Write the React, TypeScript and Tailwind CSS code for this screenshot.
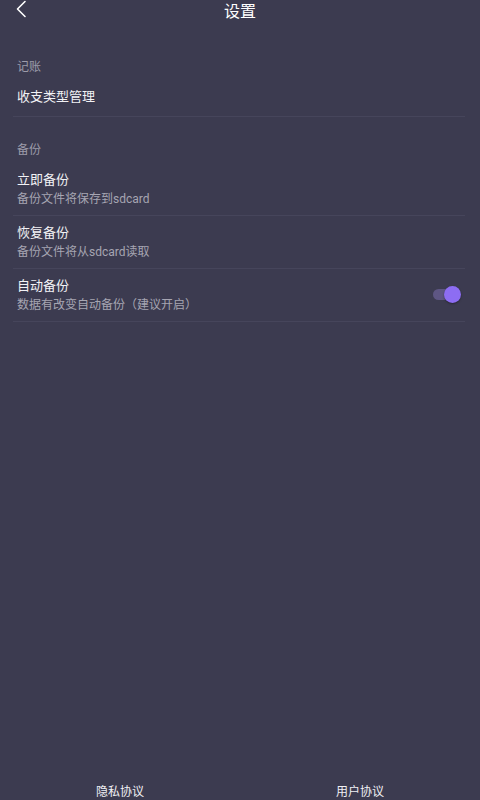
type Item = { title: string; sub?: string; toggle?: boolean }

const sections: { label: string; items: Item[] }[] = [
  { label: "记账", items: [{ title: "收支类型管理" }] },
  {
    label: "备份",
    items: [
      { title: "立即备份", sub: "备份文件将保存到sdcard" },
      { title: "恢复备份", sub: "备份文件将从sdcard读取" },
      { title: "自动备份", sub: "数据有改变自动备份（建议开启）", toggle: true },
    ],
  },
]

function Toggle() {
  return (
    <div className="relative flex h-[17px] w-[28px] items-center">
      <div className="h-[11px] w-[22px] rounded-full bg-[#5e5683]" />
      <div className="absolute right-0 top-0 h-[17px] w-[17px] rounded-full bg-[#8d6df3] shadow-[0_1px_2px_rgba(0,0,0,0.35)]" />
    </div>
  )
}

export default function App() {
  return (
    <div
      className="flex h-[800px] w-[480px] flex-col overflow-hidden bg-[#3c3b50] text-white"
      style={{ fontFamily: 'Roboto, "Noto Sans CJK SC", sans-serif' }}
    >
      <header className="relative flex h-6 items-center justify-center">
        <svg className="absolute left-0 top-0" width="32" height="20" viewBox="0 0 32 20" fill="none">
          <polyline points="25,1.5 17.5,9 25,16.5" stroke="white" strokeWidth="1.6" strokeLinecap="round" strokeLinejoin="round" />
        </svg>
        <h1 className="text-[16px] leading-6 text-white">设置</h1>
      </header>

      <main className="flex-1 pl-[13px] pr-[15px]">
        {sections.map((s, i) => (
          <section key={s.label} className={i === 0 ? "mt-[33px]" : "mt-[23px]"}>
            <div className="px-1 text-[12px] leading-5 text-[#9d9caa]">{s.label}</div>
            {s.items.map((it, j) => (
              <div key={it.title} className="border-b border-[#46455b]">
                <div className={`flex items-center px-1 pb-2 ${j === 0 ? "pt-[10px]" : "pt-[7px]"} ${it.sub ? "" : "pb-[9px]"}`}>
                  <div className="flex-1">
                    <div className="text-[13px] leading-5 text-[#f2f2f5]">{it.title}</div>
                    {it.sub && <div className="mt-px text-[12px] leading-4 text-[#a6a5b2]">{it.sub}</div>}
                  </div>
                  {it.toggle && <Toggle />}
                </div>
              </div>
            ))}
          </section>
        ))}
      </main>

      <footer className="grid h-4 grid-cols-2 text-center text-[12px] leading-4 text-[#f0f0f4]">
        <span>隐私协议</span>
        <span>用户协议</span>
      </footer>
    </div>
  )
}
